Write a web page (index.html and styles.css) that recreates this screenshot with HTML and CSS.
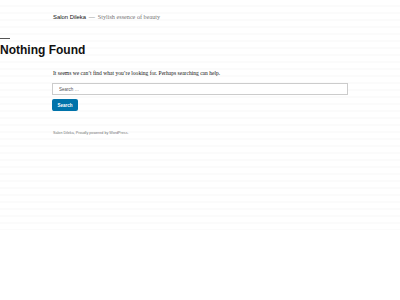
FILE: index.html
```html
<!DOCTYPE html>
<html lang="en">
<head>
  <meta charset="UTF-8">
  <title>Nothing Found &ndash; Salon Dileka</title>
  <link rel="stylesheet" href="styles.css">
</head>
<body>
  <header class="site-header">
    <span class="site-title">Salon Dileka</span>
    <span class="site-sep">&mdash;</span>
    <span class="site-desc">Stylish essence of beauty</span>
  </header>

  <main>
    <div class="page-header">
      <h1 class="page-title">Nothing Found</h1>
    </div>

    <div class="page-content">
      <p>It seems we can&rsquo;t find what you&rsquo;re looking for. Perhaps searching can help.</p>
      <form class="search-form">
        <input type="search" class="search-field" placeholder="Search &hellip;">
        <input type="submit" class="search-submit" value="Search">
      </form>
    </div>
  </main>

  <footer class="site-footer">
    Salon Dileka, Proudly powered by WordPress.
  </footer>
</body>
</html>
```

FILE: styles.css
```css
body {
  margin: 0;
  background: #fff;
  color: #111;
  font-family: "Liberation Sans", Arial, sans-serif;
  min-height: 300px;
  background-image: repeating-linear-gradient(180deg, #fff 0, #fff 5px, #fbfbfb 5px, #fbfbfb 7px);
  background-size: 100% 230px;
  background-repeat: no-repeat;
}

.site-header {
  padding: 12px 53px 0;
  height: 10px;
  font-size: 6.2px;
  line-height: 10px;
}
.site-title {
  color: #111;
  font-size: 5.9px;
}
.site-sep {
  color: #767676;
  margin: 0 1px;
}
.site-desc {
  font-family: "Liberation Serif", serif;
  color: #767676;
}

.page-header {
  margin-top: 16px;
}
.page-header::before {
  content: "";
  display: block;
  width: 10px;
  height: 1px;
  background: #555;
}
.page-title {
  margin: 4px 0 0;
  font-size: 12px;
  line-height: 14px;
  font-weight: bold;
}

.page-content {
  padding: 0 53px 0 52px;
  margin-top: 12px;
}
.page-content p {
  margin: 0 0 6px 1px;
  font-family: "Liberation Serif", serif;
  font-size: 5.55px;
  line-height: 8px;
  color: #111;
}
.search-form {
  display: flex;
  flex-direction: column;
  align-items: flex-start;
  gap: 4px;
}
.search-field {
  box-sizing: border-box;
  width: 296px;
  height: 12px;
  margin: 0;
  padding: 0 6px;
  border: 1px solid #ccc;
  border-radius: 0;
  font-family: "Liberation Sans", Arial, sans-serif;
  font-size: 4.5px;
  color: #111;
  background: #fff;
}
.search-field::placeholder {
  color: #555;
}
.search-submit {
  box-sizing: border-box;
  height: 12px;
  width: 26px;
  margin: 0;
  padding: 0;
  border: none;
  border-radius: 2px;
  background: #0073aa;
  color: #fff;
  font-family: "Liberation Sans", Arial, sans-serif;
  font-size: 4.5px;
  font-weight: bold;
}

.site-footer {
  padding: 20px 53px 0;
  font-size: 3.7px;
  color: #767676;
}
```
